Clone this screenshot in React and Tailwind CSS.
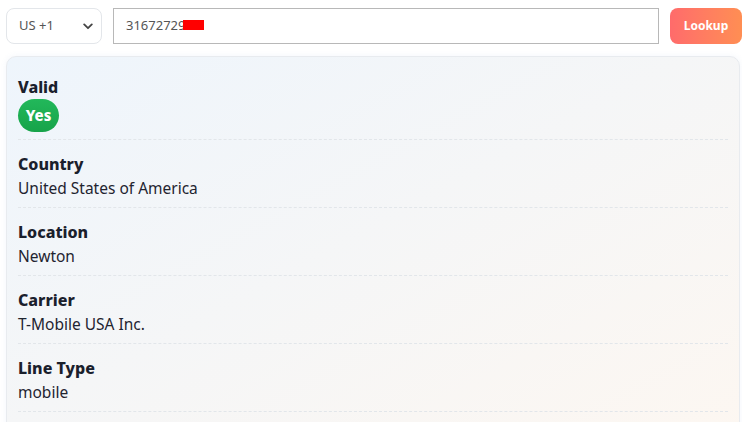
import React from "react";

const rows = [
  { label: "Country", value: "United States of America" },
  { label: "Location", value: "Newton" },
  { label: "Carrier", value: "T-Mobile USA Inc." },
  { label: "Line Type", value: "mobile" },
];

export default function App() {
  return (
    <div className="w-[742px] h-[422px] overflow-hidden bg-white text-[#1a202c]" style={{ fontFamily: '"Noto Sans", "Open Sans", sans-serif' }}>
      <div className="flex items-center pl-[6px] pt-[8px]">
        <div className="w-[96px] h-[36px] rounded-[8px] border border-[#e3e6ea] bg-white flex items-center justify-between pl-[12px] pr-[5px] text-[13px] text-[#555]">
          <span>US +1</span>
          <svg width="10" height="7" viewBox="0 0 10 7" className="mr-[3px]">
            <path d="M1.2 1.4 L5 5.2 L8.8 1.4" fill="none" stroke="#444" strokeWidth="1.8" strokeLinecap="round" strokeLinejoin="round" />
          </svg>
        </div>
        <div className="ml-[11px] w-[546px] h-[36px] border border-[#b8b8b8] bg-white flex items-center pl-[12px] text-[13px] text-[#555]">
          <span className="relative">
            31672729
            <span className="absolute left-[57px] top-[4px] w-[21px] h-[10px] bg-[#ff0000]" />
          </span>
        </div>
        <button className="ml-[11px] w-[72px] h-[36px] rounded-[8px] bg-gradient-to-r from-[#ff6b6b] to-[#ff8e53] text-white text-[12px] font-bold flex items-center justify-center">
          Lookup
        </button>
      </div>
      <div className="mt-[12px] ml-[6px] w-[734px] h-[400px] rounded-[10px] border border-[#e8ebef] bg-gradient-to-br from-[#eef5fc] to-[#fdf7f1] px-[11px] pt-[6px] shadow-[0_0_6px_rgba(100,140,200,0.08)]">
        <div className="pt-[12px] pb-[7px] border-b border-dashed border-[#e2e6ea]">
          <div className="text-[16px] leading-[24px] font-extrabold text-[#1a202c]">Valid</div>
          <span className="inline-flex items-center justify-center w-[41px] h-[33px] rounded-full bg-gradient-to-b from-[#22b85a] to-[#17a34a] text-white text-[15px] font-extrabold">Yes</span>
        </div>
        {rows.map((r) => (
          <div key={r.label} className="pt-[12px] pb-[7px] border-b border-dashed border-[#e2e6ea]">
            <div className="text-[16px] leading-[24px] font-extrabold text-[#1a202c]">{r.label}</div>
            <div className="text-[15.5px] leading-[24px] text-[#1f2430]">{r.value}</div>
          </div>
        ))}
      </div>
    </div>
  );
}
